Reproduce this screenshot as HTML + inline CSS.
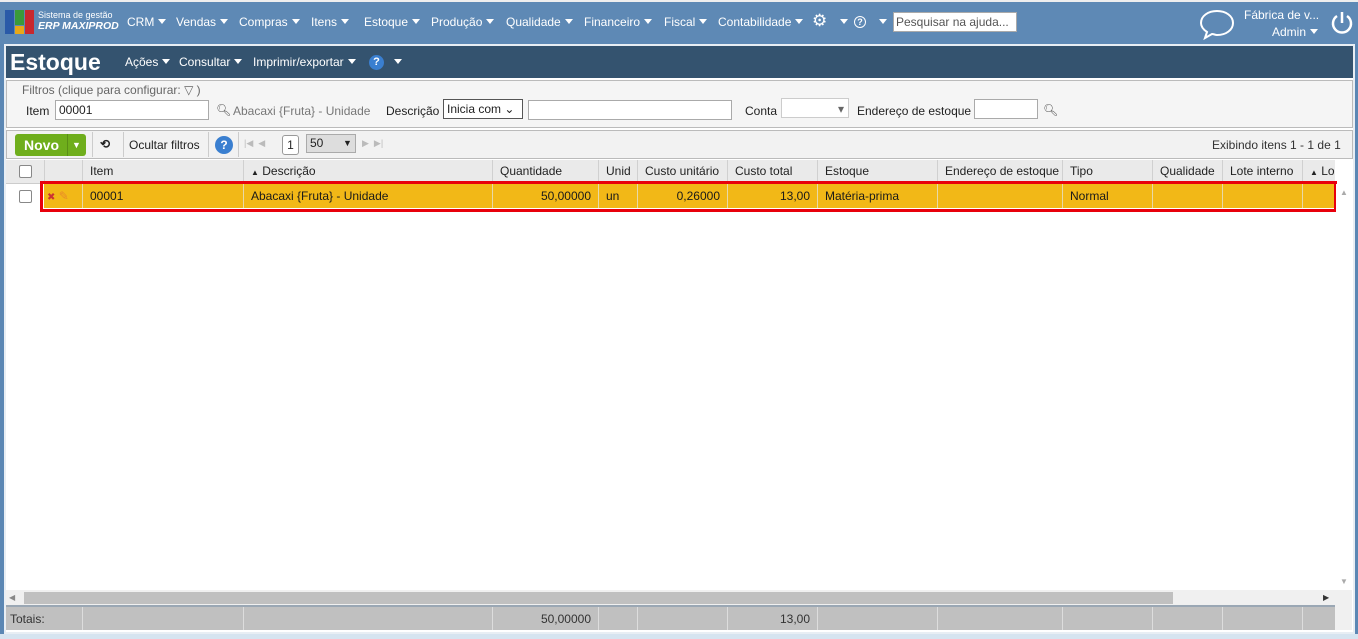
<!DOCTYPE html>
<html><head><meta charset="utf-8"><style>
*{margin:0;padding:0;box-sizing:border-box}
body{width:1358px;height:639px;overflow:hidden;background:#5b87b4;font-family:"Liberation Sans",sans-serif;font-size:12px;color:#222;position:relative}
.a{position:absolute}
.top{left:0;top:0;width:1358px;height:44px;background:#5e89b5;border-top:2px solid #eee}
.nav{color:#fff;font-size:12px;top:15px}
.tri{display:inline-block;width:0;height:0;border-left:4px solid transparent;border-right:4px solid transparent;border-top:5px solid currentColor;vertical-align:2px;margin-left:4px}
.frame{left:4px;top:44px;width:1351px;height:590px;background:#fff;border:2px solid #e8eef4}
.title{left:6px;top:46px;width:1347px;height:32px;background:#34536f;color:#fff}
.filt{left:6px;top:80px;width:1347px;height:48px;background:#f5f5f5;border:1px solid #bbb}
.inp{background:#fff;border:1px solid #aaa;height:20px}
.tool{left:6px;top:130px;width:1347px;height:29px;background:#f2f2f2;border:1px solid #bbb}
.hdr{left:6px;top:160px;width:1329px;height:24px;background:#eaeaea;border-bottom:1px solid #ccc}
.c{position:absolute;top:0;height:100%;border-left:1px solid #d0d0d0;padding:0 7px;line-height:23px;white-space:nowrap;overflow:hidden}
.row{left:6px;top:184px;width:1329px;height:24px;background:#f2b817}
.row .c{border-left-color:#e8d9a8;line-height:24px;color:#1a1a1a}
.r{text-align:right}
.tot{left:6px;top:605px;width:1329px;height:25px;background:#c0c0c0;border-top:2px solid #9aa7b4}
.tot .c{border-left-color:#ddd;line-height:25px;color:#333}
.cb{display:inline-block;width:13px;height:13px;border:1px solid #888;border-radius:2px;background:#fff;vertical-align:middle}
</style></head><body>
<div class="a top"></div>
<svg class="a" style="left:5px;top:10px" width="30" height="24"><rect x="0" y="0" width="9" height="24" fill="#2a5aa8"/><rect x="10" y="0" width="9" height="15" fill="#3a9a3a"/><rect x="10" y="16" width="9" height="8" fill="#e8a818"/><rect x="20" y="0" width="9" height="24" fill="#c8282e"/></svg>
<div class="a" style="left:38px;top:10px;color:#fff;font-size:9px;line-height:11px">Sistema de gestão<br><i style="font-size:10.5px;font-weight:bold">ERP MAXIPROD</i></div>
<div class="a nav" style="left:127px">CRM<span class="tri"></span></div>
<div class="a nav" style="left:176px">Vendas<span class="tri"></span></div>
<div class="a nav" style="left:239px">Compras<span class="tri"></span></div>
<div class="a nav" style="left:311px">Itens<span class="tri"></span></div>
<div class="a nav" style="left:364px">Estoque<span class="tri"></span></div>
<div class="a nav" style="left:431px">Produção<span class="tri"></span></div>
<div class="a nav" style="left:506px">Qualidade<span class="tri"></span></div>
<div class="a nav" style="left:584px">Financeiro<span class="tri"></span></div>
<div class="a nav" style="left:664px">Fiscal<span class="tri"></span></div>
<div class="a nav" style="left:718px">Contabilidade<span class="tri"></span></div>
<div class="a nav" style="left:812px;top:11px;font-size:17px">⚙</div>
<div class="a nav" style="left:836px"><span class="tri"></span></div>
<div class="a" style="left:854px;top:16px;width:12px;height:12px;border:1.5px solid #fff;border-radius:50%;color:#fff;font-size:9px;text-align:center;line-height:10px;font-weight:bold">?</div>
<div class="a nav" style="left:875px"><span class="tri"></span></div>
<div class="a inp" style="left:893px;top:12px;width:124px;color:#555;padding-left:2px;line-height:18px">Pesquisar na ajuda...</div>
<svg class="a" style="left:1199px;top:8px" width="36" height="32"><path d="M18 3C9 3 2 8 2 15c0 4 3 7 6 9l-2 6 7-4c2 0 3 1 5 1 9 0 16-5 16-12S27 3 18 3z" fill="none" stroke="#fff" stroke-width="2"/></svg>
<div class="a" style="left:1244px;top:8px;color:#fff;font-size:12px">Fábrica de v...</div>
<div class="a" style="left:1272px;top:25px;color:#fff;font-size:12px">Admin<span class="tri"></span></div>
<svg class="a" style="left:1330px;top:10px" width="24" height="26"><path d="M7 6A9 9 0 1 0 17 6" fill="none" stroke="#fff" stroke-width="2.5"/><line x1="12" y1="2" x2="12" y2="13" stroke="#fff" stroke-width="2.5"/></svg>

<div class="a frame"></div>
<div class="a title"><span class="a" style="left:4px;top:3px;font-size:23px;font-weight:bold">Estoque</span>
<span class="a" style="left:119px;top:9px;font-size:12px">Ações<span class="tri"></span></span>
<span class="a" style="left:173px;top:9px;font-size:12px">Consultar<span class="tri"></span></span>
<span class="a" style="left:247px;top:9px;font-size:12px">Imprimir/exportar<span class="tri"></span></span>
<span class="a" style="left:363px;top:9px;width:15px;height:15px;border-radius:50%;background:#3a7fd0;text-align:center;font-size:11px;font-weight:bold;line-height:15px">?</span>
<span class="a" style="left:384px;top:9px"><span class="tri"></span></span></div>

<div class="a filt"></div>
<div class="a" style="left:19px;top:83px;color:#666;background:#f5f5f5;padding:0 3px">Filtros (clique para configurar: ▽ )</div>
<div class="a" style="left:26px;top:104px">Item</div>
<div class="a inp" style="left:55px;top:100px;width:154px;padding-left:3px;line-height:18px">00001</div>
<div class="a" style="left:216px;top:103px;color:#555">🔍︎</div>
<div class="a" style="left:233px;top:104px;color:#777">Abacaxi {Fruta} - Unidade</div>
<div class="a" style="left:386px;top:104px">Descrição</div>
<div class="a inp" style="left:443px;top:99px;width:80px;border-color:#555;padding-left:3px;line-height:18px">Inicia com ⌄</div>
<div class="a inp" style="left:528px;top:100px;width:204px"></div>
<div class="a" style="left:745px;top:104px">Conta</div>
<div class="a inp" style="left:781px;top:98px;width:68px;border-color:#ccc;color:#666;text-align:right;padding-right:4px;line-height:20px">▾</div>
<div class="a" style="left:857px;top:104px">Endereço de estoque</div>
<div class="a inp" style="left:974px;top:99px;width:64px"></div>
<div class="a" style="left:1043px;top:103px;color:#555">🔍︎</div>

<div class="a tool"></div>
<div class="a" style="left:15px;top:134px;width:71px;height:22px;background:#6fae1c;border-radius:3px;color:#fff;font-weight:bold;font-size:14px;line-height:22px;padding-left:9px">Novo<span class="a" style="left:52px;top:0;width:1px;height:22px;background:#5a8f16"></span><span class="a" style="left:57px;top:0;font-size:9px">▼</span></div>
<div class="a" style="left:92px;top:132px;width:1px;height:25px;background:#ccc"></div>
<div class="a" style="left:100px;top:137px;font-weight:bold">⟲</div>
<div class="a" style="left:123px;top:132px;width:1px;height:25px;background:#ccc"></div>
<div class="a" style="left:129px;top:138px">Ocultar filtros</div>
<div class="a" style="left:208px;top:132px;width:1px;height:25px;background:#ccc"></div>
<div class="a" style="left:215px;top:136px;width:18px;height:18px;border-radius:50%;background:#3a7fd0;color:#fff;text-align:center;font-weight:bold;line-height:18px">?</div>
<div class="a" style="left:238px;top:132px;width:1px;height:25px;background:#ccc"></div>
<div class="a" style="left:244px;top:138px;color:#bbb;font-size:9px">|◀ &nbsp;◀</div>
<div class="a" style="left:282px;top:135px;width:17px;height:20px;background:#fff;border:1px solid #999;border-radius:3px;text-align:center;line-height:18px">1</div>
<div class="a" style="left:306px;top:134px;width:50px;height:19px;background:#ddd;border:1px solid #aaa;padding-left:3px;line-height:17px">50<span class="a" style="left:36px;top:0;font-size:9px">▼</span></div>
<div class="a" style="left:362px;top:138px;color:#bbb;font-size:9px">▶ &nbsp;▶|</div>
<div class="a" style="left:1212px;top:138px;color:#333">Exibindo itens 1 - 1 de 1</div>

<div class="a hdr">
<div class="c" style="left:0;width:38px;border:0;text-align:center"><span class="cb"></span></div>
<div class="c" style="left:38px;width:38px"></div>
<div class="c" style="left:76px;width:161px">Item</div>
<div class="c" style="left:237px;width:249px"><span style="font-size:8px">▲</span> Descrição</div>
<div class="c" style="left:486px;width:106px">Quantidade</div>
<div class="c" style="left:592px;width:39px">Unid</div>
<div class="c" style="left:631px;width:90px">Custo unitário</div>
<div class="c" style="left:721px;width:90px">Custo total</div>
<div class="c" style="left:811px;width:120px">Estoque</div>
<div class="c" style="left:931px;width:125px">Endereço de estoque</div>
<div class="c" style="left:1056px;width:90px">Tipo</div>
<div class="c" style="left:1146px;width:70px">Qualidade</div>
<div class="c" style="left:1216px;width:80px">Lote interno</div>
<div class="c" style="left:1296px;width:33px"><span style="font-size:8px">▲</span> Lo</div>
</div>
<div class="a" style="left:6px;top:184px;width:38px;height:24px;text-align:center;line-height:24px"><span class="cb"></span></div>
<div class="a row" style="left:44px;width:1291px">
<div class="c" style="left:0;width:38px;border:0;padding:0 3px"><span style="color:#c33;font-size:10px">✖</span> <span style="color:#e88a2a">✎</span></div>
<div class="c" style="left:38px;width:161px">00001</div>
<div class="c" style="left:199px;width:249px">Abacaxi {Fruta} - Unidade</div>
<div class="c r" style="left:448px;width:106px">50,00000</div>
<div class="c" style="left:554px;width:39px">un</div>
<div class="c r" style="left:593px;width:90px">0,26000</div>
<div class="c r" style="left:683px;width:90px">13,00</div>
<div class="c" style="left:773px;width:120px">Matéria-prima</div>
<div class="c" style="left:893px;width:125px"></div>
<div class="c" style="left:1018px;width:90px">Normal</div>
<div class="c" style="left:1108px;width:70px"></div>
<div class="c" style="left:1178px;width:80px"></div>
<div class="c" style="left:1258px;width:33px"></div>
</div>
<div class="a" style="left:40px;top:181px;width:1297px;height:31px;border:3px solid #e8000c"></div>
<div class="a" style="left:1336px;top:184px;width:16px;height:406px;background:#fff;color:#aaa;font-size:8px;text-align:center;padding-top:4px">▲<div style="position:absolute;bottom:4px;width:16px">▼</div></div>
<div class="a" style="left:6px;top:590px;width:1346px;height:15px;background:#f0f0f0"></div>
<div class="a" style="left:24px;top:592px;width:1149px;height:12px;background:#c0c0c0"></div>
<div class="a" style="left:9px;top:593px;color:#888;font-size:8px">◀</div>
<div class="a" style="left:1323px;top:593px;color:#333;font-size:8px">▶</div>
<div class="a tot">
<div class="c" style="left:0;width:76px;border:0;padding-left:4px">Totais:</div>
<div class="c" style="left:76px;width:161px"></div>
<div class="c" style="left:237px;width:249px"></div>
<div class="c r" style="left:486px;width:106px">50,00000</div>
<div class="c" style="left:592px;width:39px"></div>
<div class="c" style="left:631px;width:90px"></div>
<div class="c r" style="left:721px;width:90px">13,00</div>
<div class="c" style="left:811px;width:120px"></div>
<div class="c" style="left:931px;width:125px"></div>
<div class="c" style="left:1056px;width:90px"></div>
<div class="c" style="left:1146px;width:70px"></div>
<div class="c" style="left:1216px;width:80px"></div>
<div class="c" style="left:1296px;width:33px"></div>
</div>
<div class="a" style="left:1335px;top:605px;width:17px;height:25px;background:#f0f0f0"></div>
<div class="a" style="left:0;top:634px;width:1358px;height:5px;background:#d6e4f0"></div>
</body></html>
